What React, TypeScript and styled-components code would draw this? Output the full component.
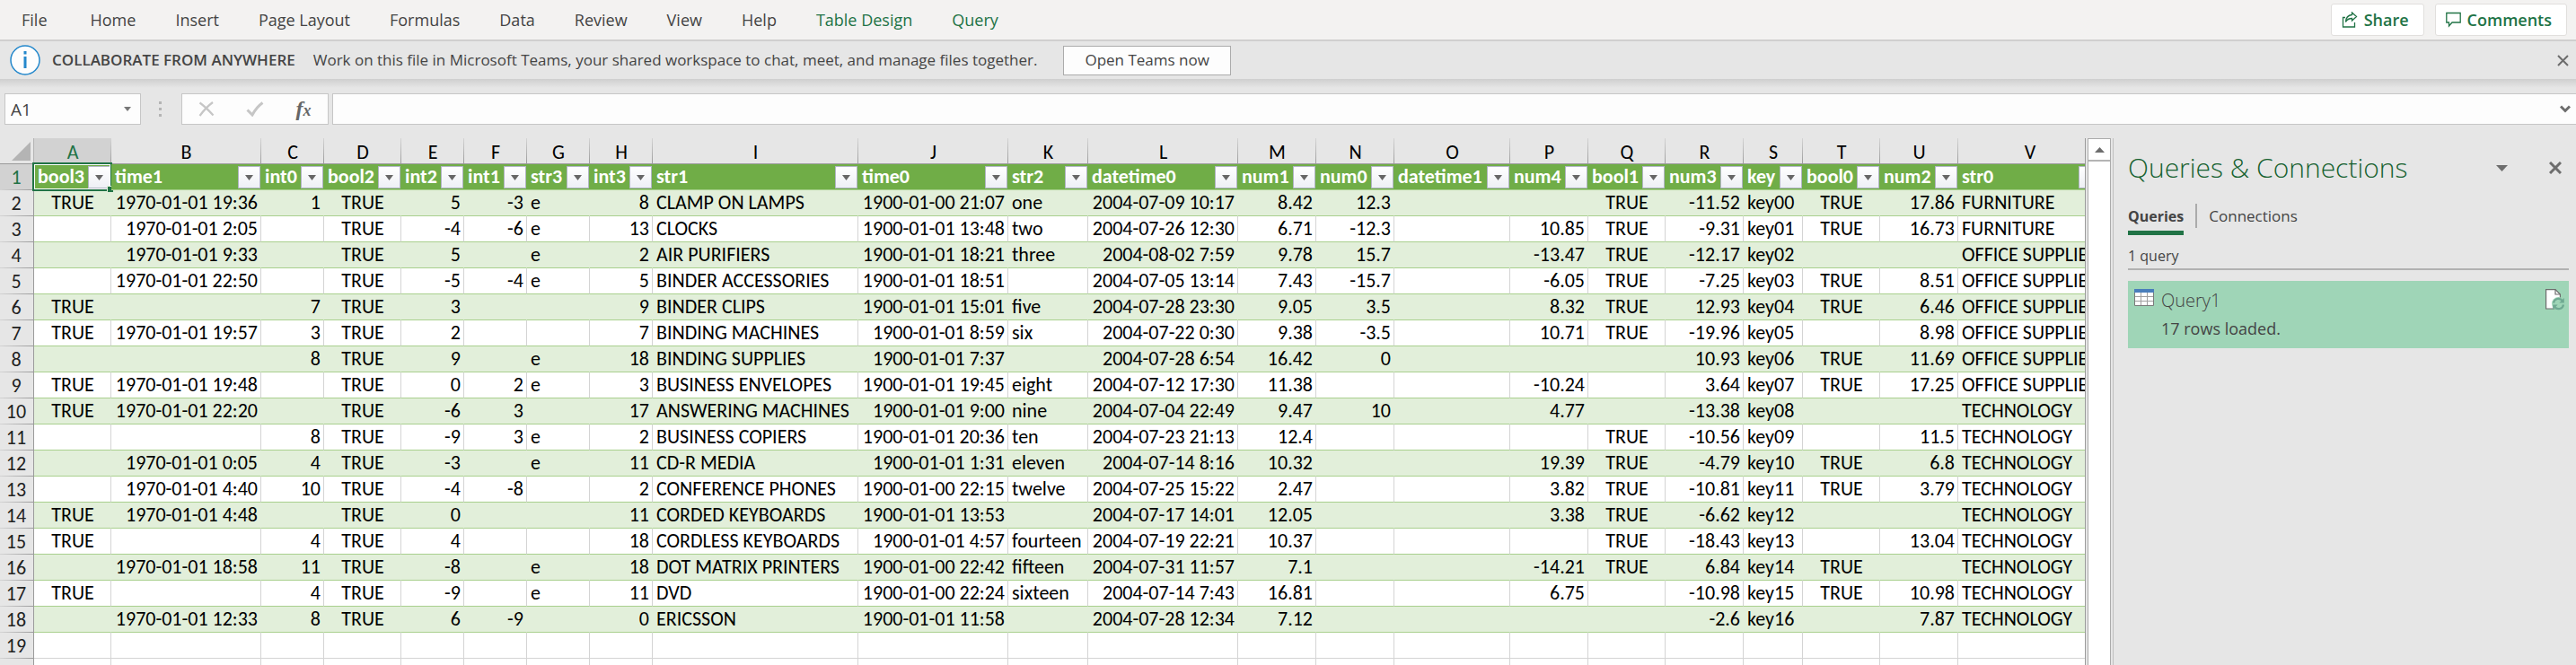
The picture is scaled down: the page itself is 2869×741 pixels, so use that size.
import React from "react";
import styled, { createGlobalStyle, css } from "styled-components";

const ui = `"Segoe UI", "Open Sans", "Noto Sans", sans-serif`;
const cellFont = `Carlito, Lato, sans-serif`;
const green = "#217346";

const GlobalStyle = createGlobalStyle`
  *, *::before, *::after { box-sizing: border-box; }
  body { margin: 0; background: #e6e6e6; font-family: ${ui}; color: #444; }
  button, input { font: inherit; color: inherit; margin: 0; }
  button { cursor: pointer; }
  svg { display: block; flex: none; }
`;

const Window = styled.div`
  display: flex;
  flex-direction: column;
  height: 100vh;
  overflow: hidden;
`;

/* Ribbon tabs */
const Ribbon = styled.header`
  display: flex;
  align-items: center;
  justify-content: space-between;
  flex: none;
  height: 46px;
  padding: 0 10px 0 2px;
  background: #f3f2f1;
  border-bottom: 2px solid #d0cfcf;
`;

const Tabs = styled.nav`
  display: flex;
  height: 100%;
`;

const Tab = styled.button<{ $contextual?: boolean; $first?: boolean }>`
  border: 0;
  background: none;
  padding: 0 ${(p) => (p.$first ? 26 : 22)}px 0 22px;
  font-size: 18px;
  line-height: 24px;
  white-space: nowrap;
  color: ${(p) => (p.$contextual ? green : "#444")};
`;

const RibbonActions = styled.div`
  display: flex;
  gap: 12px;
`;

const ActionButton = styled.button`
  display: flex;
  align-items: center;
  gap: 7px;
  height: 36px;
  padding: 0 16px 0 11px;
  border: 1px solid #e1dfdd;
  border-radius: 3px;
  background: #fff;
  color: ${green};
  font-size: 18px;
  font-weight: 600;
  line-height: 24px;
`;

/* Message bar */
const MessageBar = styled.section`
  display: flex;
  align-items: center;
  flex: none;
  height: 42px;
  padding: 0 8px 0 11px;
  font-size: 17px;
  line-height: 24px;
  white-space: nowrap;
`;

const MessageTitle = styled.strong`
  margin: 0 20px 0 13px;
  font-weight: 600;
`;

const TeamsButton = styled.button`
  height: 33px;
  margin: 0 auto 0 29px;
  padding: 0 23px;
  border: 1px solid #ababab;
  background: #fdfdfd;
`;

const IconButton = styled.button`
  display: flex;
  align-items: center;
  justify-content: center;
  padding: 0;
  border: 0;
  background: none;
`;

/* Formula bar */
const FormulaBar = styled.section`
  display: flex;
  flex: none;
  height: 66px;
  padding: 16px 0 15px 5px;
  background: linear-gradient(#cfcfcf, #e6e6e6 10px);
`;

const NameBox = styled.label`
  display: flex;
  align-items: center;
  width: 152px;
  padding: 0 10px 0 6px;
  border: 1px solid #c6c6c6;
  background: #fdfdfd;
`;

const NameInput = styled.input`
  flex: 1;
  min-width: 0;
  padding: 0;
  border: 0;
  outline: 0;
  background: none;
  font-size: 19px;
  line-height: 24px;
`;

const Grip = styled.span`
  display: flex;
  flex-direction: column;
  justify-content: center;
  align-items: center;
  gap: 4px;
  width: 45px;
  padding-right: 3px;

  i {
    width: 3px;
    height: 3px;
    background: #b4b4b4;
  }
`;

const EntryButtons = styled.div`
  display: flex;
  justify-content: space-evenly;
  width: 164px;
  border: 1px solid #c6c6c6;
  background: #fdfdfd;

  button { flex: 1; }
`;

const FormulaField = styled.label`
  display: flex;
  align-items: center;
  flex: 1;
  margin-left: 4px;
  padding-right: 6px;
  border: 1px solid #c6c6c6;
  border-right: 0;
  background: #fdfdfd;
`;

/* Worksheet */
const Workspace = styled.main`
  display: flex;
  flex: 1;
  min-height: 0;
`;

const Sheet = styled.div`
  flex: 1;
  min-width: 0;
  overflow: hidden;
  margin-right: 2px;
  border-right: 1px solid #9b9b9b;
  background: linear-gradient(#e6e6e6 28px, #fff 28px);
`;

const Grid = styled.table`
  table-layout: fixed;
  width: 2341px;
  border-collapse: separate;
  border-spacing: 0;
  font-family: ${cellFont};
  font-size: 22px;
  line-height: 24px;
  color: #000;
`;

const heading = css`
  height: 29px;
  font-weight: 400;
  background-color: #e6e6e6;
`;

const ColumnLetter = styled.th<{ $active?: boolean }>`
  ${heading}
  padding: 4px 0 0;
  border-bottom: 1px solid ${(p) => (p.$active ? green : "#9b9b9b")};
  background-color: ${(p) => (p.$active ? "#d2d2d2" : "#e6e6e6")};
  background-image: linear-gradient(#d4d4d4, #9b9b9b);
  background-size: 1px 100%;
  background-position: right;
  background-repeat: no-repeat;
  color: ${(p) => (p.$active ? green : "#000")};
`;

const SelectAll = styled.th`
  ${heading}
  padding: 0 3px 3px 0;
  border-right: 1px solid #b4b4b4;
  border-bottom: 1px solid #9b9b9b;
  vertical-align: bottom;

  svg { margin-left: auto; }
`;

const RowNumber = styled.th<{ $active?: boolean }>`
  ${heading}
  padding: 0 1px 0 0;
  border-right: 1px solid #9b9b9b;
  background-color: ${(p) => (p.$active ? "#d2d2d2" : "#e6e6e6")};
  background-image: linear-gradient(90deg, #d4d4d4, #9b9b9b);
  background-size: 100% 1px;
  background-position: bottom;
  background-repeat: no-repeat;
  color: ${(p) => (p.$active ? green : "#222")};
`;

const FieldHead = styled.th`
  position: relative;
  height: 29px;
  padding: 0 1px 0 4px;
  border-bottom: 1px solid #a9d08e;
  background: #70ad47;
  color: #fff;
  font-weight: 700;
`;

const FieldInner = styled.div`
  display: flex;
  align-items: center;
  justify-content: space-between;
  white-space: nowrap;

  span { width: 0; }
`;

const FilterButton = styled.button`
  display: flex;
  align-items: center;
  justify-content: center;
  width: 25px;
  height: 25px;
  margin-top: 1px;
  padding: 0;
  border: 1px solid #b1b5c4;
  background: linear-gradient(#fff, #eef0f5);
`;

const Selection = styled.div`
  position: absolute;
  inset: -2px -1px -2px -2px;
  border: 2px solid ${green};
  box-shadow: inset 0 0 0 1px #fff;
  pointer-events: none;

  &::after {
    content: "";
    position: absolute;
    right: -4px;
    bottom: -4px;
    width: 8px;
    height: 8px;
    border: 1px solid #e2efda;
    background: ${green};
  }
`;

const Cell = styled.td<{ $band?: boolean; $align: string; $inTable?: boolean }>`
  height: 29px;
  padding: 0 3px 0 4px;
  border-right: 1px solid ${(p) => (p.$band ? "#e2efda" : "#d4d4d4")};
  border-bottom: 1px solid ${(p) => (p.$inTable ? "#a9d08e" : "#d4d4d4")};
  background: ${(p) => (p.$band ? "#e2efda" : "#fff")};
  text-align: ${(p) => p.$align};
  white-space: nowrap;
`;

const ScrollBar = styled.div`
  flex: none;
  width: 26px;
  margin: 0 2px 0 0;
  border: 1px solid #ababab;
  border-bottom: 0;
  background: #fff;

  button {
    width: 100%;
    height: 25px;
    border-bottom: 2px solid #b4b4b4;
  }
`;

/* Side pane */
const Pane = styled.aside`
  flex: none;
  width: 516px;
  padding: 10px 8px 0 16px;
  border-left: 1px solid #c0c0c0;
`;

const PaneHead = styled.div`
  display: flex;
  align-items: center;
  padding-right: 8px;

  h2 {
    flex: 1;
    margin: 0;
    font-size: 30px;
    font-weight: 300;
    line-height: 46px;
    color: #15612f;
  }
  button:last-child { margin-left: 46px; }
`;

const PaneTabs = styled.div`
  display: flex;
  align-items: flex-start;
  height: 63px;
  padding-top: 17px;
  gap: 13px;
`;

const PaneTab = styled.button<{ $active?: boolean }>`
  padding: 0 0 2px;
  border: 0;
  border-bottom: 5px solid ${(p) => (p.$active ? green : "transparent")};
  background: none;
  font-size: ${(p) => (p.$active ? 16 : 17)}px;
  font-weight: ${(p) => (p.$active ? 700 : 400)};
  line-height: 28px;
`;

const TabDivider = styled.span`
  width: 2px;
  height: 27px;
  background: #ababab;
`;

const QueryCount = styled.p`
  margin: 0 0 12px;
  padding-bottom: 2px;
  border-bottom: 2px solid #b1b1b1;
  font-size: 16px;
  line-height: 24px;
`;

const QueryCard = styled.article`
  display: flex;
  align-items: flex-start;
  height: 75px;
  padding: 9px 4px 0 7px;
  background: #9fd5b7;
`;

const QueryText = styled.div`
  flex: 1;
  padding: 0 8px;

  h3 {
    margin: -1px 0 3px;
    font-size: 20px;
    font-weight: 300;
    line-height: 28px;
  }
  p {
    margin: 0;
    font-size: 18px;
    line-height: 28px;
  }
`;

const TABS = ["File", "Home", "Insert", "Page Layout", "Formulas", "Data", "Review", "View", "Help", "Table Design", "Query"];

type Align = "left" | "right" | "center";
const COLUMNS: [string, string, number, Align][] = [
  ["A", "bool3", 86, "center"],
  ["B", "time1", 167, "right"],
  ["C", "int0", 70, "right"],
  ["D", "bool2", 86, "center"],
  ["E", "int2", 70, "right"],
  ["F", "int1", 70, "right"],
  ["G", "str3", 70, "left"],
  ["H", "int3", 70, "right"],
  ["I", "str1", 229, "left"],
  ["J", "time0", 167, "right"],
  ["K", "str2", 89, "left"],
  ["L", "datetime0", 167, "right"],
  ["M", "num1", 87, "right"],
  ["N", "num0", 87, "right"],
  ["O", "datetime1", 129, "right"],
  ["P", "num4", 87, "right"],
  ["Q", "bool1", 86, "center"],
  ["R", "num3", 87, "right"],
  ["S", "key", 66, "left"],
  ["T", "bool0", 86, "center"],
  ["U", "num2", 87, "right"],
  ["V", "str0", 160, "left"],
];

const ROWS = [
  "TRUE|1970-01-01 19:36|1|TRUE|5|-3|e|8|CLAMP ON LAMPS|1900-01-00 21:07|one|2004-07-09 10:17|8.42|12.3|||TRUE|-11.52|key00|TRUE|17.86|FURNITURE",
  "|1970-01-01 2:05||TRUE|-4|-6|e|13|CLOCKS|1900-01-01 13:48|two|2004-07-26 12:30|6.71|-12.3||10.85|TRUE|-9.31|key01|TRUE|16.73|FURNITURE",
  "|1970-01-01 9:33||TRUE|5||e|2|AIR PURIFIERS|1900-01-01 18:21|three|2004-08-02 7:59|9.78|15.7||-13.47|TRUE|-12.17|key02|||OFFICE SUPPLIES",
  "|1970-01-01 22:50||TRUE|-5|-4|e|5|BINDER ACCESSORIES|1900-01-01 18:51||2004-07-05 13:14|7.43|-15.7||-6.05|TRUE|-7.25|key03|TRUE|8.51|OFFICE SUPPLIES",
  "TRUE||7|TRUE|3|||9|BINDER CLIPS|1900-01-01 15:01|five|2004-07-28 23:30|9.05|3.5||8.32|TRUE|12.93|key04|TRUE|6.46|OFFICE SUPPLIES",
  "TRUE|1970-01-01 19:57|3|TRUE|2|||7|BINDING MACHINES|1900-01-01 8:59|six|2004-07-22 0:30|9.38|-3.5||10.71|TRUE|-19.96|key05||8.98|OFFICE SUPPLIES",
  "||8|TRUE|9||e|18|BINDING SUPPLIES|1900-01-01 7:37||2004-07-28 6:54|16.42|0||||10.93|key06|TRUE|11.69|OFFICE SUPPLIES",
  "TRUE|1970-01-01 19:48||TRUE|0|2|e|3|BUSINESS ENVELOPES|1900-01-01 19:45|eight|2004-07-12 17:30|11.38|||-10.24||3.64|key07|TRUE|17.25|OFFICE SUPPLIES",
  "TRUE|1970-01-01 22:20||TRUE|-6|3||17|ANSWERING MACHINES|1900-01-01 9:00|nine|2004-07-04 22:49|9.47|10||4.77||-13.38|key08|||TECHNOLOGY",
  "||8|TRUE|-9|3|e|2|BUSINESS COPIERS|1900-01-01 20:36|ten|2004-07-23 21:13|12.4||||TRUE|-10.56|key09||11.5|TECHNOLOGY",
  "|1970-01-01 0:05|4|TRUE|-3||e|11|CD-R MEDIA|1900-01-01 1:31|eleven|2004-07-14 8:16|10.32|||19.39|TRUE|-4.79|key10|TRUE|6.8|TECHNOLOGY",
  "|1970-01-01 4:40|10|TRUE|-4|-8||2|CONFERENCE PHONES|1900-01-00 22:15|twelve|2004-07-25 15:22|2.47|||3.82|TRUE|-10.81|key11|TRUE|3.79|TECHNOLOGY",
  "TRUE|1970-01-01 4:48||TRUE|0|||11|CORDED KEYBOARDS|1900-01-01 13:53||2004-07-17 14:01|12.05|||3.38|TRUE|-6.62|key12|||TECHNOLOGY",
  "TRUE||4|TRUE|4|||18|CORDLESS KEYBOARDS|1900-01-01 4:57|fourteen|2004-07-19 22:21|10.37||||TRUE|-18.43|key13||13.04|TECHNOLOGY",
  "|1970-01-01 18:58|11|TRUE|-8||e|18|DOT MATRIX PRINTERS|1900-01-00 22:42|fifteen|2004-07-31 11:57|7.1|||-14.21|TRUE|6.84|key14|TRUE||TECHNOLOGY",
  "TRUE||4|TRUE|-9||e|11|DVD|1900-01-00 22:24|sixteen|2004-07-14 7:43|16.81|||6.75||-10.98|key15|TRUE|10.98|TECHNOLOGY",
  "|1970-01-01 12:33|8|TRUE|6|-9||0|ERICSSON|1900-01-01 11:58||2004-07-28 12:34|7.12|||||-2.6|key16||7.87|TECHNOLOGY",
].map((row) => row.split("|"));

const Triangle = ({ width, height, color, up }: { width: number; height: number; color: string; up?: boolean }) => (
  <svg width={width} height={height} viewBox="0 0 10 6" preserveAspectRatio="none" aria-hidden="true">
    <path d={up ? "M0 6h10L5 0z" : "M0 0h10L5 6z"} fill={color} />
  </svg>
);

const Cross = ({ size, weight, color }: { size: number; weight: number; color: string }) => (
  <svg width={size} height={size} viewBox={`0 0 ${size} ${size}`} aria-hidden="true">
    <path d={`M1 1L${size - 1} ${size - 1}M${size - 1} 1L1 ${size - 1}`} stroke={color} strokeWidth={weight} />
  </svg>
);

const ShareIcon = () => (
  <svg width="18" height="18" viewBox="0 0 18 18" fill="none" stroke={green} strokeWidth="1.3" aria-hidden="true">
    <path d="M4 6.500H1.500V17h13v-5" />
    <path d="M11.500 1l5 4.500-5 4.500V7.500C8 7.500 6 8.500 4.500 11.500 4.700 7 7 4 11.500 3.500z" />
  </svg>
);

const CommentIcon = () => (
  <svg width="17" height="18" viewBox="0 0 17 18" fill="none" stroke={green} strokeWidth="1.3" aria-hidden="true">
    <path d="M.8 1.500h15.400v10.500H7L3.500 16v-4H.8z" />
  </svg>
);

const InfoIcon = () => (
  <svg width="34" height="34" viewBox="0 0 34 34" aria-hidden="true">
    <circle cx="17" cy="17" r="16" fill="#fdfdfd" stroke="#2488cc" strokeWidth="1.500" />
    <path d="M15.500 13h3v13h-3zM15.500 7h3v3.500h-3z" fill="#2488cc" />
  </svg>
);

const CheckIcon = () => (
  <svg width="20" height="17" viewBox="0 0 20 17" aria-hidden="true">
    <path d="M1.500 9.500L7 15C10 9.500 13.500 5 18.500 1.500" fill="none" stroke="#c6c6c6" strokeWidth="3" />
  </svg>
);

const CancelIcon = () => (
  <svg width="18" height="17" viewBox="0 0 18 17" aria-hidden="true">
    <path d="M1.500 1.500C7 5.500 12 10.500 16.500 15.500M16 1C10.500 5 5.500 10.500 1.500 16" fill="none" stroke="#c6c6c6" strokeWidth="2.200" />
  </svg>
);

const FunctionLabel = styled.i`
  font: italic 700 24px/28px "Liberation Serif", serif;
  color: #666;

  small { font-size: 18px; }
`;

const TableIcon = () => (
  <svg width="22" height="19" viewBox="0 0 22 19" aria-hidden="true">
    <path d="M.5 3.500h21v15H.5z" fill="#fff" stroke="#7a7a7a" />
    <path d="M7.500 4v14M14.500 4v14M1 8.500h20M1 13.500h20" stroke="#a0a0a0" />
    <path d="M0 0h22v4H0z" fill="#4a7ebb" />
  </svg>
);

const RefreshDocIcon = () => (
  <svg width="22" height="24" viewBox="0 0 22 24" fill="none" aria-hidden="true">
    <path d="M.6.6h10.400l5.400 5.400v16H.6z" fill="#fff" stroke="#6d6d6d" strokeWidth="1.200" />
    <path d="M11 .6V6h5.400" stroke="#6d6d6d" strokeWidth="1.200" />
    <circle cx="14.500" cy="16.500" r="7.500" fill="#9fd5b7" />
    <path d="M9 15.500a5.500 5.500 0 0 1 9.800-2.500M20 17.500a5.500 5.500 0 0 1-9.800 2.500" stroke="#6fa992" strokeWidth="2.200" />
    <path d="M20.800 10v5.500h-5.500zM8.200 23v-5.500h5.500z" fill="#6fa992" />
  </svg>
);

export default function App() {
  return (
    <Window>
      <GlobalStyle />
      <Ribbon>
        <Tabs aria-label="Ribbon">
          {TABS.map((tab, i) => (
            <Tab key={tab} $first={i === 0} $contextual={i > 8}>{tab}</Tab>
          ))}
        </Tabs>
        <RibbonActions>
          <ActionButton><ShareIcon />Share</ActionButton>
          <ActionButton><CommentIcon />Comments</ActionButton>
        </RibbonActions>
      </Ribbon>

      <MessageBar>
        <InfoIcon />
        <MessageTitle>COLLABORATE FROM ANYWHERE</MessageTitle>
        <span>Work on this file in Microsoft Teams, your shared workspace to chat, meet, and manage files together.</span>
        <TeamsButton>Open Teams now</TeamsButton>
        <IconButton aria-label="Close message"><Cross size={13} weight={2} color="#6d6d6d" /></IconButton>
      </MessageBar>

      <FormulaBar>
        <NameBox>
          <NameInput aria-label="Name box" defaultValue="A1" />
          <Triangle width={8} height={5} color="#777" />
        </NameBox>
        <Grip><i /><i /><i /></Grip>
        <EntryButtons>
          <IconButton aria-label="Cancel"><CancelIcon /></IconButton>
          <IconButton aria-label="Enter"><CheckIcon /></IconButton>
          <IconButton aria-label="Insert function"><FunctionLabel>f<small>x</small></FunctionLabel></IconButton>
        </EntryButtons>
        <FormulaField>
          <NameInput aria-label="Formula bar" />
          <IconButton aria-label="Expand formula bar">
            <svg width="12" height="9" viewBox="0 0 12 9" aria-hidden="true">
              <path d="M1 1.500l5 5 5-5" fill="none" stroke="#6d6d6d" strokeWidth="3" />
            </svg>
          </IconButton>
        </FormulaField>
      </FormulaBar>

      <Workspace>
        <Sheet>
          <Grid>
            <colgroup>
              <col width={38} />
              {COLUMNS.map(([letter, , width]) => <col key={letter} width={width} />)}
            </colgroup>
            <thead>
              <tr>
                <SelectAll aria-label="Select all">
                  <svg width="21" height="21" viewBox="0 0 21 21"><path d="M21 0v21H0z" fill="#b4b4b4" /></svg>
                </SelectAll>
                {COLUMNS.map(([letter], i) => (
                  <ColumnLetter key={letter} $active={i === 0}>{letter}</ColumnLetter>
                ))}
              </tr>
              <tr>
                <RowNumber $active>1</RowNumber>
                {COLUMNS.map(([letter, field], i) => (
                  <FieldHead key={letter}>
                    <FieldInner>
                      <span>{field}</span>
                      <FilterButton aria-label={`Filter ${field}`}><Triangle width={9} height={6} color="#666" /></FilterButton>
                    </FieldInner>
                    {i === 0 && <Selection />}
                  </FieldHead>
                ))}
              </tr>
            </thead>
            <tbody>
              {ROWS.map((row, r) => (
                <tr key={r}>
                  <RowNumber>{r + 2}</RowNumber>
                  {row.map((value, c) => (
                    <Cell key={c} $inTable $band={r % 2 === 0} $align={COLUMNS[c][3]}>{value}</Cell>
                  ))}
                </tr>
              ))}
              {[19, 20].map((n) => (
                <tr key={n}>
                  <RowNumber>{n === 19 ? n : null}</RowNumber>
                  {COLUMNS.map(([letter]) => <Cell key={letter} $align="left" />)}
                </tr>
              ))}
            </tbody>
          </Grid>
        </Sheet>
        <ScrollBar>
          <IconButton aria-label="Scroll up"><Triangle up width={11} height={6} color="#6d6d6d" /></IconButton>
        </ScrollBar>
        <Pane>
          <PaneHead>
            <h2>Queries &amp; Connections</h2>
            <IconButton aria-label="Pane options"><Triangle width={13} height={7} color="#6d6d6d" /></IconButton>
            <IconButton aria-label="Close pane"><Cross size={14} weight={3} color="#6d6d6d" /></IconButton>
          </PaneHead>
          <PaneTabs>
            <PaneTab $active>Queries</PaneTab>
            <TabDivider />
            <PaneTab>Connections</PaneTab>
          </PaneTabs>
          <QueryCount>1 query</QueryCount>
          <QueryCard>
            <TableIcon />
            <QueryText>
              <h3>Query1</h3>
              <p>17 rows loaded.</p>
            </QueryText>
            <RefreshDocIcon />
          </QueryCard>
        </Pane>
      </Workspace>
    </Window>
  );
}
